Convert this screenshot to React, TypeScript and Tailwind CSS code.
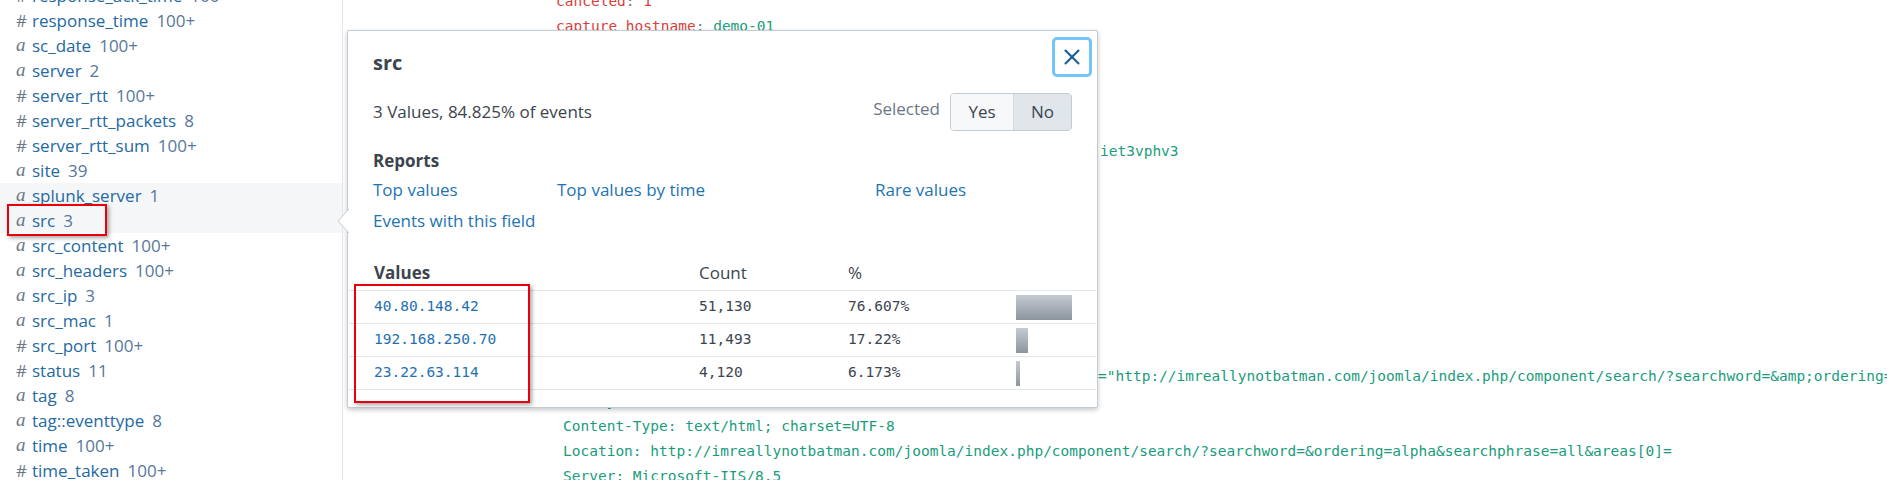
import React from "react";
import { X } from "lucide-react";

type Field = { kind: "a" | "#"; name: string; count: string; hl?: boolean };

const fields: Field[] = [
  { kind: "#", name: "response_ack_time", count: "100+" },
  { kind: "#", name: "response_time", count: "100+" },
  { kind: "a", name: "sc_date", count: "100+" },
  { kind: "a", name: "server", count: "2" },
  { kind: "#", name: "server_rtt", count: "100+" },
  { kind: "#", name: "server_rtt_packets", count: "8" },
  { kind: "#", name: "server_rtt_sum", count: "100+" },
  { kind: "a", name: "site", count: "39" },
  { kind: "a", name: "splunk_server", count: "1", hl: true },
  { kind: "a", name: "src", count: "3", hl: true },
  { kind: "a", name: "src_content", count: "100+" },
  { kind: "a", name: "src_headers", count: "100+" },
  { kind: "a", name: "src_ip", count: "3" },
  { kind: "a", name: "src_mac", count: "1" },
  { kind: "#", name: "src_port", count: "100+" },
  { kind: "#", name: "status", count: "11" },
  { kind: "a", name: "tag", count: "8" },
  { kind: "a", name: "tag::eventtype", count: "8" },
  { kind: "a", name: "time", count: "100+" },
  { kind: "#", name: "time_taken", count: "100+" },
];

const values = [
  { ip: "40.80.148.42", count: "51,130", pct: "76.607%", bar: 56 },
  { ip: "192.168.250.70", count: "11,493", pct: "17.22%", bar: 12 },
  { ip: "23.22.63.114", count: "4,120", pct: "6.173%", bar: 4 },
];

const ui = "font-['Open_Sans','Lato',sans-serif]";
const mono = "font-['DejaVu_Sans_Mono','Liberation_Mono',monospace] text-[14.5px]";

const FieldRow = ({ f }: { f: Field }) => (
  <div className={`h-[25px] flex items-center pl-[16px] ${f.hl ? "bg-[#f5f6f8]" : ""}`}>
    <span className="w-[16px] text-[#6b7785]">
      {f.kind === "a" ? (
        <span className="font-['Liberation_Serif',serif] italic text-[19px]">a</span>
      ) : (
        <span className="text-[17px]">#</span>
      )}
    </span>
    <span className="text-[#2469a3]">{f.name}</span>
    <span className="ml-[8px] text-[#58779a]">{f.count}</span>
  </div>
);

const Sidebar = () => (
  <div className={`w-[343px] shrink-0 border-r border-[#e1e6eb] text-[17px] ${ui}`}>
    <div className="-mt-[17px]">
      {fields.map((f) => (
        <FieldRow key={f.name} f={f} />
      ))}
    </div>
  </div>
);

const Key = ({ k }: { k: string }) => (
  <>
    <span className="text-[#d93f3c]">{k}</span>
    <span className="text-[#6b7785]">: </span>
  </>
);

const EventText = () => (
  <div className={`flex-1 pl-[213px] -mt-[11px] leading-[25px] whitespace-nowrap text-[#1a9c7c] ${mono}`}>
    <div>
      <Key k="canceled" />
      <span className="text-[#d93f3c]">1</span>
    </div>
    <div>
      <Key k="capture_hostname" />
      demo-01
    </div>
    <div>
      <Key k="client_rtt" />
      0
    </div>
    <div>
      <Key k="client_rtt_packets" />
      0
    </div>
    <div>
      <Key k="client_rtt_sum" />
      0
    </div>
    <div>
      <Key k="content_type" />
      text/html
    </div>
    <div className="flex">
      <span className="inline-block w-[544px] overflow-hidden">
        <Key k="cookie" />
        ASPSESSIONIDQCBSTRCQ=OCKBJMFBNKBHLGDKCMOJ
      </span>
      <span>iet3vphv3</span>
    </div>
    <div>
      <Key k="dest_content" />
    </div>
    <div className="pl-[7px]">HTTP/1.1 302 Object moved</div>
    <div className="pl-[7px]">Cache-Control: private</div>
    <div className="pl-[7px]">Content-Length: 253</div>
    <div className="pl-[7px]">Date: Wed, 10 Aug 2016 21:46:34 GMT</div>
    <div className="pl-[7px]">X-Powered-By: ASP.NET</div>
    <div className="pl-[7px]">&nbsp;</div>
    <div className="pl-[7px]">&lt;head&gt;&lt;title&gt;Object moved&lt;/title&gt;&lt;/head&gt;</div>
    <div className="pl-[7px] flex">
      <span className="inline-block w-[535px] overflow-hidden">
        &lt;body&gt;&lt;h1&gt;Object Moved&lt;/h1&gt;This object may be found &lt;a HREF
      </span>
      <span>="http://imreallynotbatman.com/joomla/index.php/component/search/?searchword=&amp;amp;ordering=alpha&amp;amp;searchphrase=all</span>
    </div>
    <div className="pl-[7px]">&lt;/body&gt;</div>
    <div className="pl-[7px]">Content-Type: text/html; charset=UTF-8</div>
    <div className="pl-[7px]">
      Location: http://imreallynotbatman.com/joomla/index.php/component/search/?searchword=&amp;ordering=alpha&amp;searchphrase=all&amp;areas[0]=
    </div>
    <div className="pl-[7px]">Server: Microsoft-IIS/8.5</div>
  </div>
);

const FieldPopover = () => (
  <div
    className={`absolute left-[347px] top-[30px] w-[751px] h-[378px] bg-white border border-[#c3cbd4] rounded-[2px] shadow-[0_2px_5px_rgba(0,0,0,0.22)] text-[#3c444d] ${ui}`}
  >
    <svg className="absolute -left-[11px] top-[178px]" width="12" height="24" viewBox="0 0 12 24">
      <polygon points="12,0 1,12 12,24" fill="#ffffff" />
      <polyline points="12,0 1,12 12,24" fill="none" stroke="#c3cbd4" strokeWidth="1" />
    </svg>

    <button className="absolute right-[5px] top-[6px] w-[40px] h-[40px] flex items-center justify-center rounded-[5px] border-[3px] border-[#72c6f7] bg-white text-[#1c5f94]">
      <X size={26} strokeWidth={1.9} />
    </button>

    <div className="px-[25px] pt-[19px]">
      <div className="text-[20px] font-bold leading-[25px]">src</div>

      <div className="mt-[18px] flex items-center justify-between h-[38px]">
        <div className="text-[17px]">3 Values, 84.825% of events</div>
        <div className="flex items-center">
          <span className="text-[17px] text-[#6b7785] mr-[10px] -mt-[6px]">Selected</span>
          <div className="flex h-[38px] border border-[#c3cbd4] rounded-[4px] overflow-hidden text-[17px]">
            <span className="w-[63px] flex items-center justify-center bg-[#f7f8fa] border-r border-[#d5dae0]">Yes</span>
            <span className="w-[57px] flex items-center justify-center bg-[#e1e6eb]">No</span>
          </div>
        </div>
      </div>

      <div className="mt-[18px] text-[17px] font-bold leading-[24px]">Reports</div>
      <div className="mt-[5px] flex text-[17px] text-[#1e73b2] leading-[24px]">
        <span className="w-[184px]">Top values</span>
        <span className="w-[318px]">Top values by time</span>
        <span>Rare values</span>
      </div>
      <div className="mt-[7px] text-[17px] text-[#1e73b2] leading-[24px]">Events with this field</div>
    </div>

    <div className="mt-[22px]">
      <div className="grid grid-cols-[350px_149px_168px_1fr] h-[36px] items-center border-b border-[#e1e6eb] text-[17px] mx-[1px]">
        <span className="pl-[25px] font-bold">Values</span>
        <span>Count</span>
        <span>%</span>
        <span />
      </div>
      {values.map((v) => (
        <div
          key={v.ip}
          className={`grid grid-cols-[350px_149px_168px_1fr] h-[33px] items-center border-b border-[#e1e6eb] mx-[1px] ${mono}`}
        >
          <span className="pl-[25px] text-[#2270b0]">{v.ip}</span>
          <span>{v.count}</span>
          <span>{v.pct}</span>
          <span>
            <span
              className="block h-[25px] bg-gradient-to-b from-[#c5cbd3] to-[#8c949e]"
              style={{ width: v.bar }}
            />
          </span>
        </div>
      ))}
    </div>
  </div>
);

export default function App() {
  return (
    <div className="relative w-[1887px] h-[480px] overflow-hidden bg-white flex">
      <Sidebar />
      <EventText />
      <FieldPopover />

      {/* annotation boxes */}
      <div className="absolute left-[7px] top-[204px] w-[100px] h-[32px] border-2 border-[#e8000b] shadow-[2px_2px_4px_rgba(0,0,0,0.35)]" />
      <div className="absolute left-[354px] top-[284px] w-[176px] h-[119px] border-2 border-[#e8000b] shadow-[2px_2px_4px_rgba(0,0,0,0.35)]" />
    </div>
  );
}
